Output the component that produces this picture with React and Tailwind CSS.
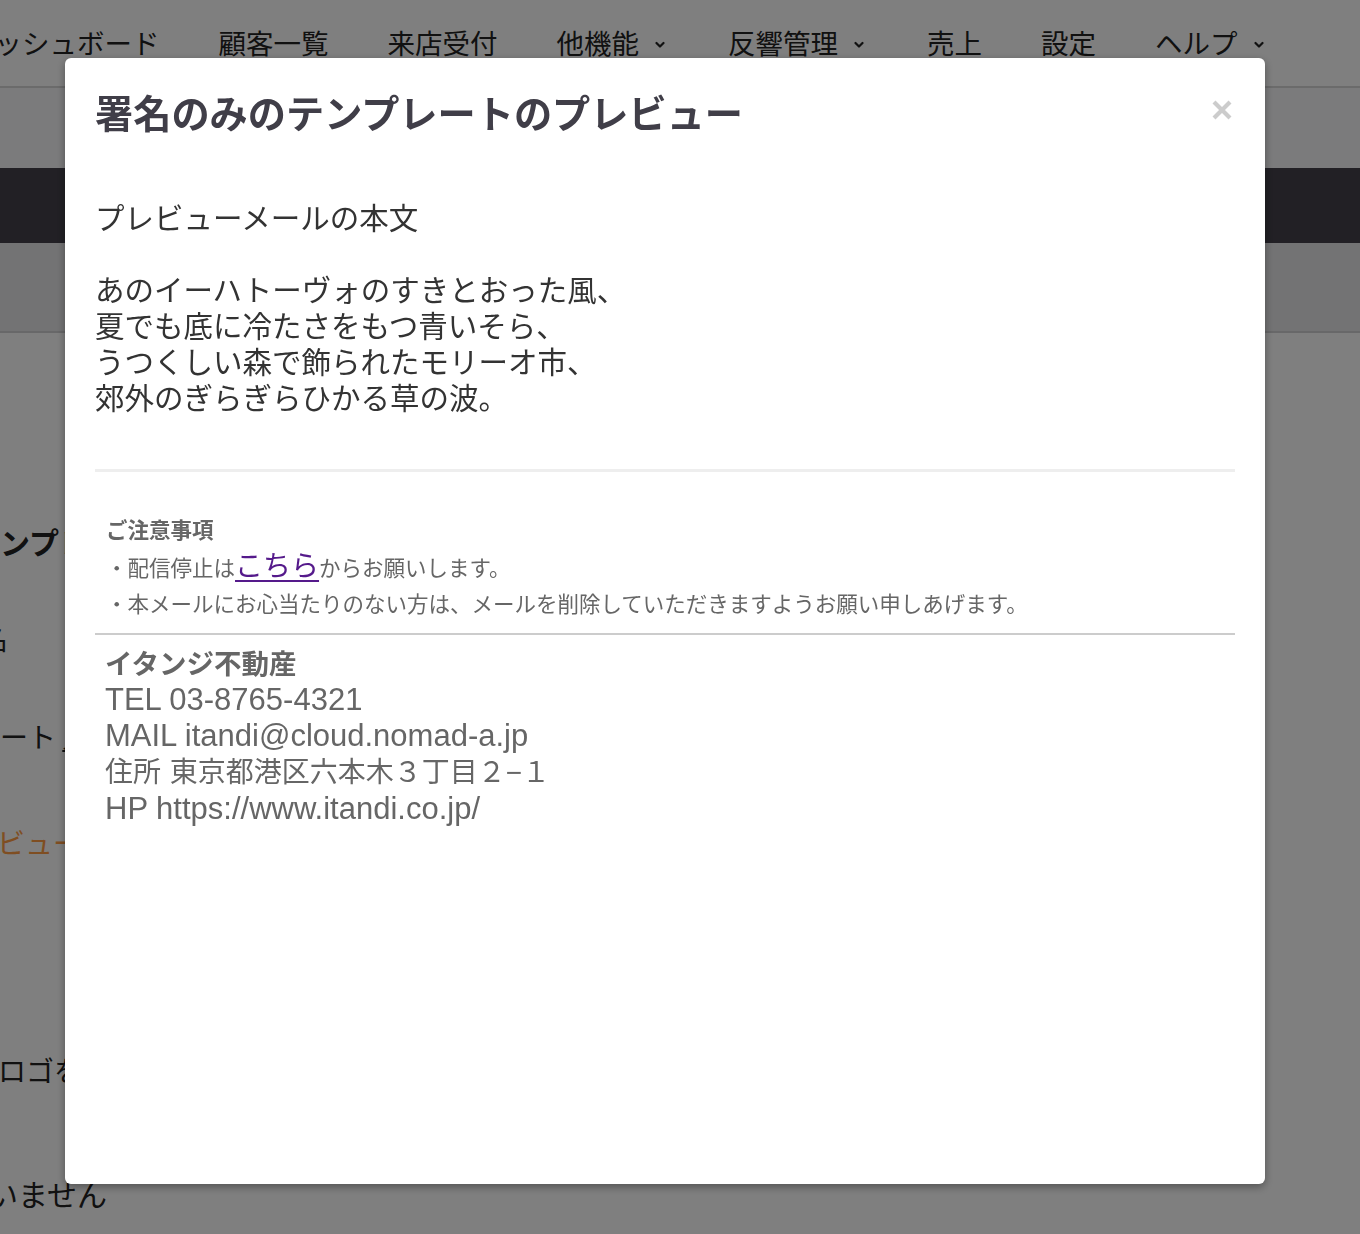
import React from "react";

function Chevron() {
  return (
    <svg width="10" height="8" viewBox="0 0 10 8" className="ml-[16px] mr-[4px] mt-[4px]">
      <polyline points="1.5,2 5,5.5 8.5,2" fill="none" stroke="#222" strokeWidth="2.2" strokeLinecap="round" strokeLinejoin="round" />
    </svg>
  );
}

function NavItem({ label, menu }) {
  return (
    <div className="flex items-center shrink-0">
      <span>{label}</span>
      {menu && <Chevron />}
    </div>
  );
}

function CloseIcon() {
  return (
    <svg width="22" height="22" viewBox="0 0 22 22">
      <path d="M3 3 L19 19 M19 3 L3 19" stroke="#cccccc" strokeWidth="4.2" strokeLinecap="butt" />
    </svg>
  );
}

export default function App() {
  return (
    <div className="relative min-h-[1234px] w-[1360px] overflow-hidden bg-white font-['Noto_Sans_CJK_JP',sans-serif] text-[#222]">
      {/* top navigation */}
      <nav className="h-[88px] border-b-2 border-[#d6d6d6] bg-white">
        <div className="-ml-[33px] flex h-full items-center gap-[59px] text-[27.5px] leading-none text-[#222]">
          <NavItem label="ダッシュボード" />
          <NavItem label="顧客一覧" />
          <NavItem label="来店受付" />
          <NavItem label="他機能" menu />
          <NavItem label="反響管理" menu />
          <NavItem label="売上" />
          <NavItem label="設定" />
          <NavItem label="ヘルプ" menu />
        </div>
      </nav>
      <div className="h-[80px] bg-[#f6f6f8]" />
      <div className="h-[75px] bg-[#44404a]" />
      <div className="h-[90px] border-b-2 border-[#d0d0d2] bg-[#e6e6e8]" />

      {/* page content */}
      <div className="flex flex-col">
        <div className="-ml-[30px] mt-[190px] text-[30px] font-bold leading-[36px]">テンプレート</div>
        <div className="-ml-[48px] mt-[61px] text-[28px] leading-[36px]">件名</div>
        <div className="ml-0 mt-[62px] text-[28px] leading-[36px]">
          ート <span className="underline">入力</span>
        </div>
        <div className="-ml-[59px] mt-[70px] text-[28px] leading-[36px] text-[#ff9d45]">プレビュー</div>
        <div className="-ml-[2px] mt-[192px] text-[28px] leading-[36px]">ロゴを設定</div>
        <div className="-ml-[12px] mt-[87px] text-[30px] leading-[36px]">いません</div>
      </div>

      {/* modal */}
      <div className="fixed inset-0 bg-black/50">
        <div className="ml-[65px] mt-[58px] flex h-[1126px] w-[1200px] flex-col rounded-md bg-white px-[30px] shadow-[0_3px_8px_rgba(0,0,0,0.35)]">
          <div className="flex items-center justify-between pt-[30px]">
            <h2 className="text-[38.2px] font-bold leading-[48px] text-[#403e48]">署名のみのテンプレートのプレビュー</h2>
            <button className="mr-[2px] mt-[-4px]">
              <CloseIcon />
            </button>
          </div>

          <div className="mt-[62px] text-[29.5px] leading-[36px] text-[#333]">
            <p>プレビューメールの本文</p>
            <p>&nbsp;</p>
            <p>あのイーハトーヴォのすきとおった風、</p>
            <p>夏でも底に冷たさをもつ青いそら、</p>
            <p>うつくしい森で飾られたモリーオ市、</p>
            <p>郊外のぎらぎらひかる草の波。</p>
          </div>

          <div className="mt-[55px] h-[3px] bg-[#eeeeee]" />

          <div className="ml-[11px] mt-[39px] text-[21.5px] leading-[36px] text-[#666]">
            <p className="mb-[2px] font-bold">ご注意事項</p>
            <p>
              ・配信停止は
              <a href="#" className="text-[28px] leading-[0] text-[#551a8b] underline underline-offset-[4px]">こちら</a>
              からお願いします。
            </p>
            <p>・本メールにお心当たりのない方は、メールを削除していただきますようお願い申しあげます。</p>
          </div>

          <div className="mt-[12px] h-[2px] bg-[#cccccc]" />

          <div className="ml-[10px] mt-[9px] font-['Liberation_Sans','Noto_Sans_CJK_JP',sans-serif] text-[31px] leading-[36px] text-[#666]">
            <p className="mb-[2px] font-['Noto_Sans_CJK_JP',sans-serif] text-[27.5px] font-bold">イタンジ不動産</p>
            <p>TEL 03-8765-4321</p>
            <p>MAIL itandi@cloud.nomad-a.jp</p>
            <p>
              <span className="text-[28px]">住所</span> <span className="text-[28px]">東京都港区六本木３丁目２−１</span>
            </p>
            <p>HP https://www.itandi.co.jp/</p>
          </div>
        </div>
      </div>
    </div>
  );
}
